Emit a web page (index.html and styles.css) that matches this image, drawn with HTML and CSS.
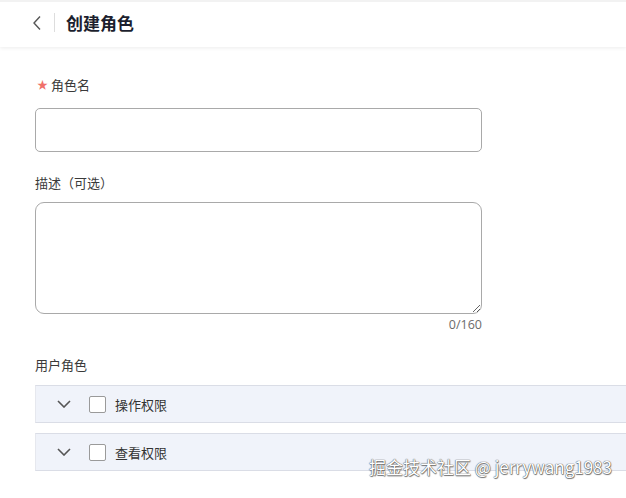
FILE: index.html
```html
<!DOCTYPE html>
<html lang="zh">
<head>
<meta charset="utf-8">
<link rel="stylesheet" href="styles.css">
</head>
<body>
<header class="header">
  <span class="back">
    <svg width="10" height="16" viewBox="0 0 10 16"><path d="M8 1.5 L2 8 L8 14.5" fill="none" stroke="#555" stroke-width="1.4"/></svg>
  </span>
  <span class="divider"></span>
  <h1 class="title">创建角色</h1>
</header>
<main class="form">
  <div class="label label-first"><span class="star">★</span>角色名</div>
  <input class="input" type="text">
  <div class="label label-desc">描述（可选）</div>
  <textarea class="textarea"></textarea>
  <div class="counter">0/160</div>
  <div class="label label-roles">用户角色</div>
  <div class="rows">
    <div class="row">
      <svg class="chev" width="14" height="8" viewBox="0 0 14 8"><path d="M1 1 L7 7 L13 1" fill="none" stroke="#555" stroke-width="1.6"/></svg>
      <span class="check"></span>
      <span class="row-text">操作权限</span>
    </div>
    <div class="row">
      <svg class="chev" width="14" height="8" viewBox="0 0 14 8"><path d="M1 1 L7 7 L13 1" fill="none" stroke="#555" stroke-width="1.6"/></svg>
      <span class="check"></span>
      <span class="row-text">查看权限</span>
    </div>
  </div>
</main>
<div class="watermark">掘金技术社区 @ jerrywang1983</div>
</body>
</html>
```
FILE: styles.css
```css
* { box-sizing: border-box; }
html, body { margin: 0; padding: 0; }
body {
  font-family: "Noto Sans CJK SC", "Noto Sans", sans-serif;
  background: #fff;
  width: 626px;
  height: 498px;
  overflow: hidden;
  position: relative;
  color: #333;
}
.header {
  height: 47px;
  display: flex;
  align-items: center;
  padding-left: 32px;
  padding-bottom: 4px;
  background: #fff;
  box-shadow: 0 1px 4px rgba(0,0,0,0.08);
  border-top: 2px solid #f2f2f2;
}
.back { display: flex; align-items: center; width: 10px; height: 16px; }
.divider {
  width: 1px;
  height: 19px;
  background: #ddd;
  margin-left: 12px;
  margin-right: 11px;
}
.title {
  margin: 0;
  font-size: 17px;
  font-weight: 700;
  color: #1c1f2e;
  line-height: 20px;
}
.form { padding-left: 35px; }
.label {
  font-size: 13px;
  line-height: 20px;
  color: #3a3a3a;
}
.label-first { margin-top: 27px; margin-left: 2px; }
.star { color: #f0706a; font-size: 11px; margin-right: 3px; vertical-align: 1px; }
.input {
  display: block;
  margin-top: 13px;
  width: 447px;
  height: 44px;
  border: 1px solid #a9a9a9;
  border-radius: 5px;
  outline: none;
  background: #fff;
}
.label-desc { margin-top: 21px; }
.textarea {
  display: block;
  margin-top: 9px;
  width: 447px;
  height: 112px;
  border: 1px solid #a9a9a9;
  border-radius: 9px;
  outline: none;
  font-family: inherit;
  resize: vertical;
}
.counter {
  width: 447px;
  text-align: right;
  font-family: "Open Sans", "Noto Sans", sans-serif;
  font-size: 12.5px;
  line-height: 18px;
  margin-top: 2px;
  color: #6b6b6b;
}
.label-roles { margin-top: 21px; }
.rows {
  margin-top: 10px;
  display: flex;
  flex-direction: column;
  gap: 10px;
}
.row {
  height: 38px;
  background: #f0f3fa;
  border-top: 1px solid #dadde6;
  border-bottom: 1px solid #dadde6;
  border-left: 1px solid #e6e8ee;
  display: flex;
  align-items: center;
  padding-left: 21px;
}
.chev { display: block; }
.check {
  width: 17px;
  height: 17px;
  border: 1px solid #9a9a9a;
  border-radius: 2px;
  background: #fff;
  margin-left: 18px;
}
.row-text {
  margin-left: 9px;
  font-size: 13px;
  color: #333;
}
.watermark {
  position: absolute;
  right: 14px;
  bottom: 19px;
  font-family: "Noto Sans CJK SC", "Noto Sans", sans-serif;
  font-size: 17px;
  line-height: 24px;
  color: #fff;
  text-shadow: 0 0 1px #555, 0 0 1px #555, 0.5px 0.5px 1px #777;
}
```
